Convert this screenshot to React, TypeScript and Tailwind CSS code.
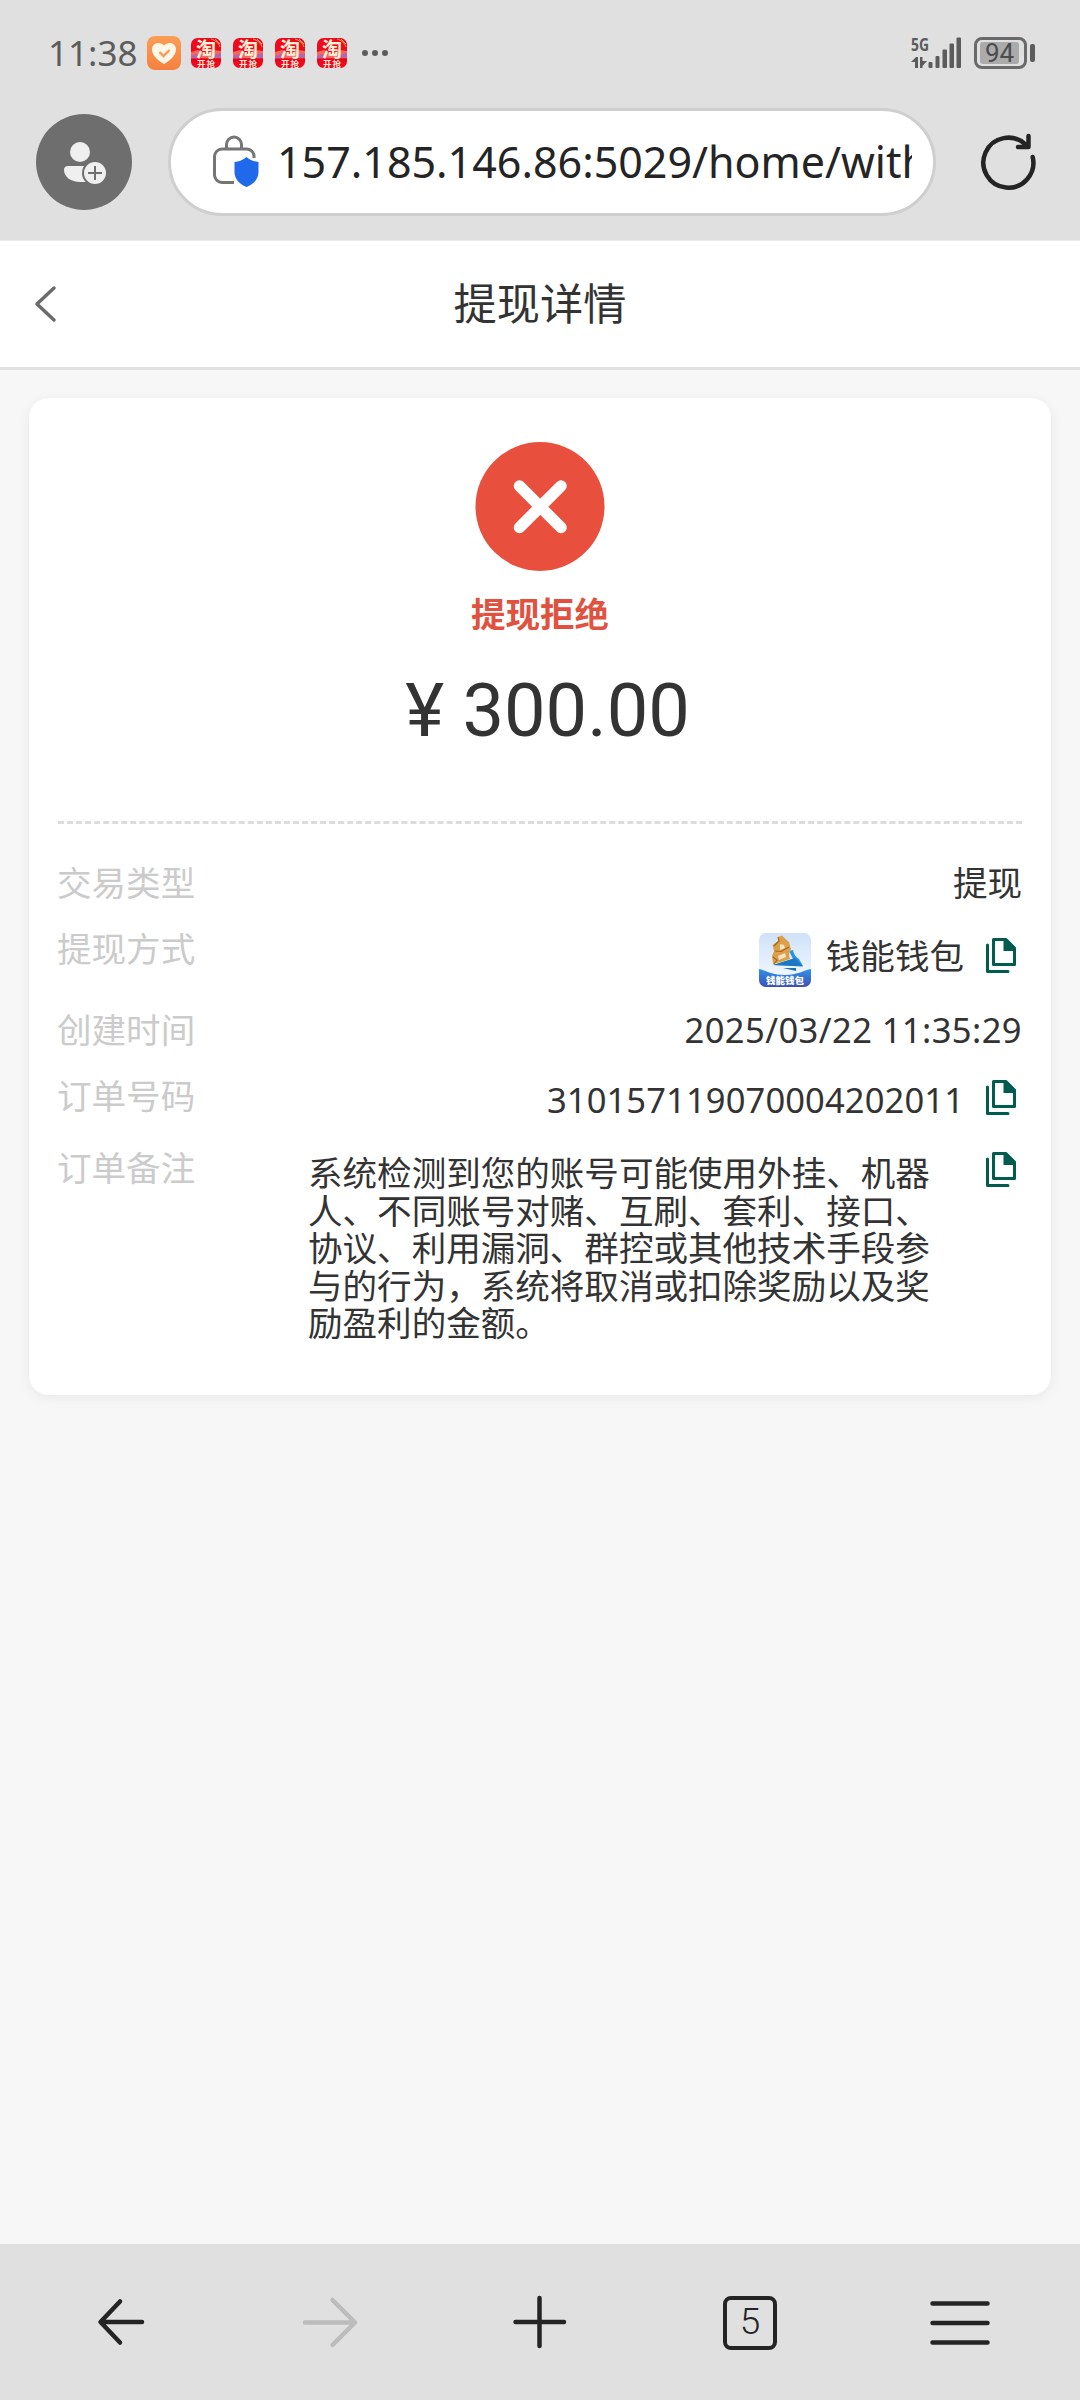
import React from 'react';

const REMARK =
  '系统检测到您的账号可能使用外挂、机器人、不同账号对赌、互刷、套利、接口、协议、利用漏洞、群控或其他技术手段参与的行为，系统将取消或扣除奖励以及奖励盈利的金额。';

const HeartIcon: React.FC = () => (
  <svg className="w-[34px] h-[34px]" viewBox="0 0 34 34">
    <defs>
      <linearGradient id="heartBg" x1="0" y1="0" x2="0" y2="1">
        <stop offset="0" stopColor="#fb9d55" />
        <stop offset="1" stopColor="#f5803f" />
      </linearGradient>
    </defs>
    <rect width="34" height="34" rx="8" fill="url(#heartBg)" />
    <path
      d="M17 28C13 26 5 20 5 13.5C5 9.500 8 7 11.200 7C13.600 7 15.600 8 17 9.500C18.400 8 20.400 7 22.800 7C26 7 29 9.500 29 13.500C29 20 21 26 17 28Z"
      fill="#fff8e8"
    />
    <path d="M12.500 16L16.500 20L22.500 14" fill="none" stroke="#f79a55" strokeWidth="2.400" />
  </svg>
);

const TaobaoIcon: React.FC = () => (
  <svg className="w-[30px] h-[30px]" viewBox="0 0 30 30">
    <rect width="30" height="30" rx="6.500" fill="#ee0a1c" />
    <path d="M0 14L7 12L14 16L22 12L30 13V20.500H0Z" fill="#f4695f" />
    <path d="M0 18L6 16L10 20L5 21H0ZM22 17L30 15V20H24Z" fill="#b565a8" />
    <path d="M20 1C24 2 28 5 29 9M24 1L29 6" stroke="#f9a070" strokeWidth="1" fill="none" />
    <rect y="20.500" width="30" height="3" fill="#e9041a" />
    <text x="15" y="18.500" textAnchor="middle" fontSize="20" fontWeight="700" fill="#fff0d8">
      淘
    </text>
    <text x="15.500" y="28.500" textAnchor="middle" fontSize="8.500" fontWeight="700" letterSpacing="1" fill="#ffe9d8">
      开抢
    </text>
  </svg>
);

const SignalIcon: React.FC = () => (
  <svg className="w-[51px] h-[32px]" viewBox="0 0 51 32" fill="#5c5c5c">
    <text x="0" y="14" fontSize="18" fontWeight="700" textLength="18" lengthAdjust="spacingAndGlyphs">
      5G
    </text>
    <path d="M0 25L5 20H7V31H4V25ZM9 20H11.500V24H16L11.500 29V31H9Z" />
    <rect x="17.500" y="25" width="4" height="6" rx="1" />
    <rect x="24.500" y="19" width="4" height="12" rx="1" />
    <rect x="31.500" y="12.500" width="4.500" height="18.500" rx="1" />
    <rect x="38.500" y="6.500" width="4.500" height="24.500" rx="1" />
    <rect x="45.500" y="0.500" width="4.500" height="30.500" rx="1" />
  </svg>
);

const StatusBar: React.FC = () => (
  <div className="h-[105px] pl-[48px] pr-[45px] flex items-center justify-between">
    <div className="flex items-center">
      <span className="w-[91px] text-[35px] leading-[36px] text-[#5c5c5c] whitespace-nowrap">11:38</span>
      <div className="ml-2 flex items-center gap-[12px]">
        <HeartIcon />
        <div className="-ml-0.5 flex gap-[12px]">
          {[0, 1, 2, 3].map((i) => (
            <TaobaoIcon key={i} />
          ))}
        </div>
      </div>
      <div className="ml-[15px] flex gap-[4px]">
        <span className="w-[6px] h-[6px] rounded-full bg-[#5c5c5c]" />
        <span className="w-[6px] h-[6px] rounded-full bg-[#5c5c5c]" />
        <span className="w-[6px] h-[6px] rounded-full bg-[#5c5c5c]" />
      </div>
    </div>
    <div className="flex items-center">
      <SignalIcon />
      <div className="ml-3 w-[53px] h-[32px] rounded-[8px] border-[3px] border-[#6a6a6a] p-[2px]">
        <div className="w-[39px] ml-px h-[22px] rounded-[3px] bg-[#ababab] text-center font-[Roboto,sans-serif] text-[26px] leading-[22px] text-[#4c4c4c]">
          94
        </div>
      </div>
      <span className="ml-[3px] w-[5px] h-[18px] rounded-[2px] bg-[#5c5c5c]" />
    </div>
  </div>
);

const AddressBar: React.FC = () => (
  <div className="h-[135px] pl-9 pr-[42px] pt-[3px] flex items-start">
    <div className="mt-[6px] w-24 h-24 rounded-full bg-[#6e6e6e]">
      <svg className="w-24 h-24" viewBox="0 0 96 96">
        <circle cx="44" cy="38" r="10" fill="#efefef" />
        <path d="M32 52H57V68H44C35 68 28 63 28 56C28 53.500 29.500 52 32 52Z" fill="#efefef" />
        <circle cx="59" cy="59" r="13" fill="#6e6e6e" />
        <circle cx="59" cy="59" r="11" fill="#efefef" />
        <path d="M59 52V66M52 59H66" stroke="#6e6e6e" strokeWidth="2" />
      </svg>
    </div>
    <div className="ml-9 w-[768px] h-[108px] rounded-full border-[3px] border-[#cfcfcf] bg-white pl-[41px] pr-[21px] flex items-center">
      <svg className="w-[48px] h-[54px] shrink-0" viewBox="0 0 48 54" fill="none" stroke="#757575" strokeWidth="3">
        <path d="M14.500 14V9.500A7.500 7.500 0 0 1 29.500 9.500V14" />
        <path d="M42 23V21A7.500 7.500 0 0 0 34.500 14H10A7.500 7.500 0 0 0 2.500 21.500V40A7.500 7.500 0 0 0 10 47.500H22" />
        <path
          d="M34.500 22C38 25 42 26.500 46.500 27V37C46.500 45 40.500 49.500 34.500 52C28.500 49.500 22.500 45 22.500 37V27C27 26.500 31 25 34.500 22Z"
          fill="#1f69ea"
          stroke="none"
        />
      </svg>
      <div className="ml-[17px] flex-1 overflow-hidden whitespace-nowrap text-[43px] leading-[56px] text-[#242424]">
        157.185.146.86:5029/home/withdraw
      </div>
    </div>
    <svg
      className="ml-[42px] mt-[24px] w-[60px] h-[60px]"
      viewBox="0 0 60 60"
      fill="none"
      stroke="#242424"
      strokeWidth="4.500"
      strokeLinecap="round"
      strokeLinejoin="round"
    >
      <path d="M54.700 25A25 25 0 1 1 47.500 12.500" />
      <path d="M50.500 4V15H40" />
    </svg>
  </div>
);

const CopyIcon: React.FC = () => (
  <svg className="w-[31px] h-[35px] shrink-0" viewBox="0 0 31 35" fill="none" stroke="#005c4e" strokeWidth="3">
    <path d="M7.500 1.500H20L28.500 10V26.500H7.500Z" strokeLinejoin="round" />
    <path d="M17.500 1.500H20L29 10.500V13H17.500Z" fill="#005c4e" stroke="none" />
    <path d="M1.500 7V33.500H22" strokeLinecap="round" strokeLinejoin="round" />
  </svg>
);

const WalletIcon: React.FC = () => (
  <svg className="w-[52px] h-[54px] shrink-0" viewBox="0 0 52 54">
    <defs>
      <linearGradient id="walletSky" x1="0" y1="0" x2="0" y2="1">
        <stop offset="0" stopColor="#cfe2f9" />
        <stop offset="1" stopColor="#f8fbff" />
      </linearGradient>
      <linearGradient id="walletSea" x1="0" y1="0" x2="0" y2="1">
        <stop offset="0" stopColor="#2f93ea" />
        <stop offset="1" stopColor="#3f4fb4" />
      </linearGradient>
      <clipPath id="walletClip">
        <rect width="52" height="54" rx="7" />
      </clipPath>
    </defs>
    <g clipPath="url(#walletClip)">
      <rect width="52" height="54" fill="url(#walletSky)" />
      <path d="M0 36C6 37 12 42 26 42C38 42 46 37 52 36V54H0Z" fill="url(#walletSea)" />
      <path d="M30 18L34 17C35 22 37 24 40 26L44 33L14 32L34 26Z" fill="#2a93dc" />
      <path d="M14 32L36 25L44 33.500Z" fill="#1c78c4" />
      <path d="M24 35H37V38Z" fill="#1f6fc0" />
      <path d="M19 4L23 2.500L26 5.500L30 9L32 16L30 21L31 26L22 29L14 31L13 23L15 18L13.500 12L19 8Z" fill="#dda04a" />
      <path d="M21 11L25 12L26 15L21 17ZM19 23L26 20L27 24L20 27Z" fill="#f3e3c4" />
      <path d="M19 4L20 8L15 13M16 18L22 18.500L30 14M14 24L18 27L15 31" stroke="#a8641f" strokeWidth="1.200" fill="none" />
      <text x="26" y="51" textAnchor="middle" fontSize="9.500" fontWeight="900" fill="#fff">
        钱能钱包
      </text>
    </g>
  </svg>
);

const Label: React.FC<{ children: React.ReactNode }> = ({ children }) => (
  <span className="-ml-px leading-[38px] text-[#cbcbcb]">{children}</span>
);

const WithdrawCard: React.FC = () => (
  <div className="mx-[29px] mt-[28px] h-[997px] rounded-[20px] bg-white px-[29px] shadow-[0_3px_14px_rgba(0,0,0,0.06)]">
    <div className="pt-[44px] flex flex-col items-center">
      <svg className="w-[130px] h-[130px]" viewBox="0 0 130 130">
        <circle cx="65" cy="64.500" r="64.500" fill="#e94f3d" />
        <path d="M44.500 44L86 85.500M86 44L44.500 85.500" stroke="#fff" strokeWidth="11.500" strokeLinecap="round" />
      </svg>
      <div className="mt-[22px] text-[34.56px] leading-[40px] font-bold text-[#e0523f]">提现拒绝</div>
      <div className="mt-[37px] ml-[15px] h-[80px] font-[Roboto,sans-serif] text-[74px] leading-[80px] text-[#333]">
        ¥ 300.00
      </div>
    </div>
    <div className="mt-[70px] border-t-[3px] border-dashed border-[#dcdcdc]" />
    <div className="text-[34.56px] text-[#333]">
      <div className="mt-[40px] h-[66px] flex justify-between">
        <Label>交易类型</Label>
        <span className="leading-[38px]">提现</span>
      </div>
      <div className="h-[81px] flex justify-between">
        <Label>提现方式</Label>
        <div className="flex items-start pr-[5px]">
          <div className="mt-[3px]">
            <WalletIcon />
          </div>
          <span className="ml-[15px] mt-[7px] leading-[38px]">钱能钱包</span>
          <div className="ml-[22px] mt-[8px]">
            <CopyIcon />
          </div>
        </div>
      </div>
      <div className="h-[66px] flex justify-between">
        <Label>创建时间</Label>
        <span className="leading-[38px] tracking-[0.4px]">2025/03/22 11:35:29</span>
      </div>
      <div className="h-[72px] flex justify-between">
        <Label>订单号码</Label>
        <div className="flex items-start pr-[5px]">
          <span className="mt-[4px] leading-[38px] tracking-[0.1px]">310157119070004202011</span>
          <div className="ml-[22px] mt-[3px]">
            <CopyIcon />
          </div>
        </div>
      </div>
      <div className="flex justify-between">
        <Label>订单备注</Label>
        <div className="flex items-start pr-[5px]">
          <p className="mt-[5px] w-[624px] leading-[37.6px]">{REMARK}</p>
          <div className="ml-[54px] mt-[3px]">
            <CopyIcon />
          </div>
        </div>
      </div>
    </div>
  </div>
);

const BottomNav: React.FC = () => (
  <div className="h-[156px] bg-[#e0e0e0] px-[15px] grid grid-cols-5 justify-items-center items-center text-[#242424]">
    <svg
      className="w-[60px] h-[60px]"
      viewBox="0 0 60 60"
      fill="none"
      stroke="currentColor"
      strokeWidth="4.500"
      strokeLinecap="round"
      strokeLinejoin="round"
    >
      <path d="M52 30H11M30 9.500L10.500 30L30 50.500" />
    </svg>
    <svg
      className="w-[60px] h-[60px] text-[#bcbcbc]"
      viewBox="0 0 60 60"
      fill="none"
      stroke="currentColor"
      strokeWidth="4.500"
      strokeLinecap="round"
      strokeLinejoin="round"
    >
      <path d="M5 30.500H55M32.500 8L55 30.500L32.500 53" />
    </svg>
    <svg className="w-[60px] h-[60px]" viewBox="0 0 60 60" fill="none" stroke="currentColor" strokeWidth="4.500" strokeLinecap="round">
      <path d="M5.500 30H54M29.500 6V54" />
    </svg>
    <div className="mt-[2px] w-[54px] h-[54px] rounded-[8px] border-4 border-[#242424] text-center font-[Roboto,sans-serif] font-light text-[37px] leading-[44px]">
      5
    </div>
    <svg className="w-[60px] h-[60px]" viewBox="0 0 60 60" stroke="currentColor" strokeWidth="4.500" strokeLinecap="round">
      <path d="M2.500 11.500H57.500M2.500 31H57.500M2.500 50.500H57.500" />
    </svg>
  </div>
);

const App: React.FC = () => (
  <div className="w-[1080px] h-[2400px] flex flex-col bg-[#f7f7f7] font-['Noto_Sans','Noto_Sans_CJK_SC',sans-serif]">
    <div className="h-[240px] bg-[#e0e0e0]">
      <StatusBar />
      <AddressBar />
    </div>
    <div className="h-[130px] border-t border-t-[#ececec] border-b-[3px] border-b-[#e2e2e2] bg-white grid grid-cols-[80px_1fr_80px] items-center">
      <svg
        className="ml-[31px] w-[30px] h-[40px]"
        viewBox="0 0 30 40"
        fill="none"
        stroke="#6b6b6b"
        strokeWidth="3.500"
        strokeLinecap="round"
        strokeLinejoin="round"
      >
        <path d="M23 4L6 20L23 36" />
      </svg>
      <h1 className="text-center text-[43.2px] leading-[60px] text-[#333]">提现详情</h1>
    </div>
    <div className="flex-1">
      <WithdrawCard />
    </div>
    <BottomNav />
  </div>
);

export default App;
